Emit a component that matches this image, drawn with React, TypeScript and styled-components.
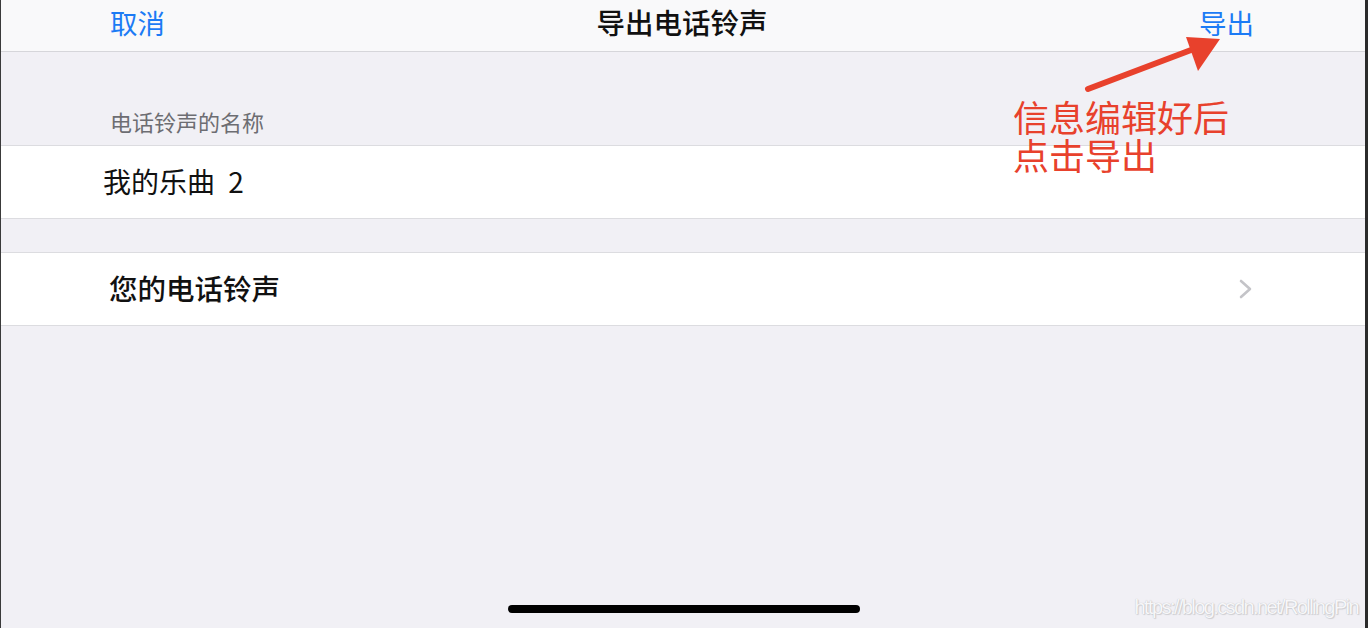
import React from "react";
import styled, { createGlobalStyle } from "styled-components";

const GlobalStyle = createGlobalStyle`
  html, body, #root {
    margin: 0;
    padding: 0;
    height: 100%;
  }
  body {
    font-family: "Noto Sans CJK SC", "Noto Sans", sans-serif;
    background: #2b2b2b;
  }
`;

const Screen = styled.div`
  position: relative;
  height: 628px;
  box-sizing: border-box;
  background: #f1f0f5;
  border-left: 1px solid #3a3a3a;
  border-right: 3px solid #2b2b2b;
  overflow: hidden;
`;

const NavBar = styled.div`
  height: 52px;
  box-sizing: border-box;
  background: #f9f9fa;
  border-bottom: 1.5px solid #d6d6da;
  display: grid;
  grid-template-columns: 1fr auto 1fr;
  align-items: center;
  padding: 0 111px 0 109px;
`;

const NavButton = styled.span<{ $align?: "left" | "right" }>`
  color: #1c7bf5;
  font-size: 27.5px;
  line-height: 1;
  justify-self: ${(p) => (p.$align === "right" ? "end" : "start")};
  margin-top: -6px;
`;

const Title = styled.span`
  color: #111;
  font-size: 28.5px;
  font-weight: 500;
  line-height: 1;
  margin-top: -6px;
`;

const SectionHeader = styled.div`
  height: 93px;
  box-sizing: border-box;
  display: flex;
  align-items: flex-end;
  padding: 0 0 13px 109px;
  color: #6d6d72;
  font-size: 22px;
  line-height: 1;
`;

const Row = styled.div<{ $indent: number }>`
  height: 74px;
  box-sizing: border-box;
  background: #fff;
  border-top: 1px solid #dcdce0;
  border-bottom: 1px solid #dcdce0;
  display: flex;
  align-items: center;
  justify-content: space-between;
  padding: 0 112px 0 ${(p) => p.$indent}px;
`;

const RowText = styled.span<{ $weight?: number; $size: number }>`
  color: #111;
  font-size: ${(p) => p.$size}px;
  font-weight: ${(p) => p.$weight ?? 400};
  line-height: 1;
  word-spacing: 7px;
  margin-top: -2px;
`;

const Gap = styled.div`
  height: 33px;
`;

const Annotation = styled.div`
  position: absolute;
  left: 1012px;
  top: 97px;
  color: #e8412c;
  font-size: 36px;
  line-height: 38px;
`;

const ArrowSvg = styled.svg`
  position: absolute;
  left: 1070px;
  top: 25px;
`;

const HomeIndicator = styled.div`
  position: absolute;
  left: 507px;
  top: 605px;
  width: 352px;
  height: 8px;
  border-radius: 4px;
  background: #000;
`;

const Watermark = styled.div`
  position: absolute;
  right: 7px;
  top: 596px;
  font-family: "Liberation Sans", sans-serif;
  font-size: 20px;
  letter-spacing: -1.6px;
  color: #f7f7f9;
  text-shadow: 0 0 1px #b4b4b9, 1px 1px 1px #d0d0d4;
`;

const Chevron = () => (
  <svg width="14" height="20" viewBox="0 0 14 20">
    <polyline
      points="2,2 11,10 2,18"
      fill="none"
      stroke="#c4c4c8"
      strokeWidth="2.6"
      strokeLinecap="round"
      strokeLinejoin="round"
    />
  </svg>
);

export default function App() {
  return (
    <>
      <GlobalStyle />
      <Screen>
        <NavBar>
          <NavButton $align="left">取消</NavButton>
          <Title>导出电话铃声</Title>
          <NavButton $align="right">导出</NavButton>
        </NavBar>
        <SectionHeader>电话铃声的名称</SectionHeader>
        <Row $indent={102}>
          <RowText $size={28}>我的乐曲 2</RowText>
        </Row>
        <Gap />
        <Row $indent={108}>
          <RowText $size={28.5} $weight={500}>您的电话铃声</RowText>
          <Chevron />
        </Row>

        <ArrowSvg width="160" height="75" viewBox="0 0 160 75">
          <line x1="17" y1="64" x2="128" y2="22" stroke="#e8412c" strokeWidth="6" strokeLinecap="round" />
          <polygon points="115,12 149,14 127,46" fill="#e8412c" />
        </ArrowSvg>
        <Annotation>
          信息编辑好后
          <br />
          点击导出
        </Annotation>

        <HomeIndicator />
        <Watermark>https://blog.csdn.net/RollingPin</Watermark>
      </Screen>
    </>
  );
}
